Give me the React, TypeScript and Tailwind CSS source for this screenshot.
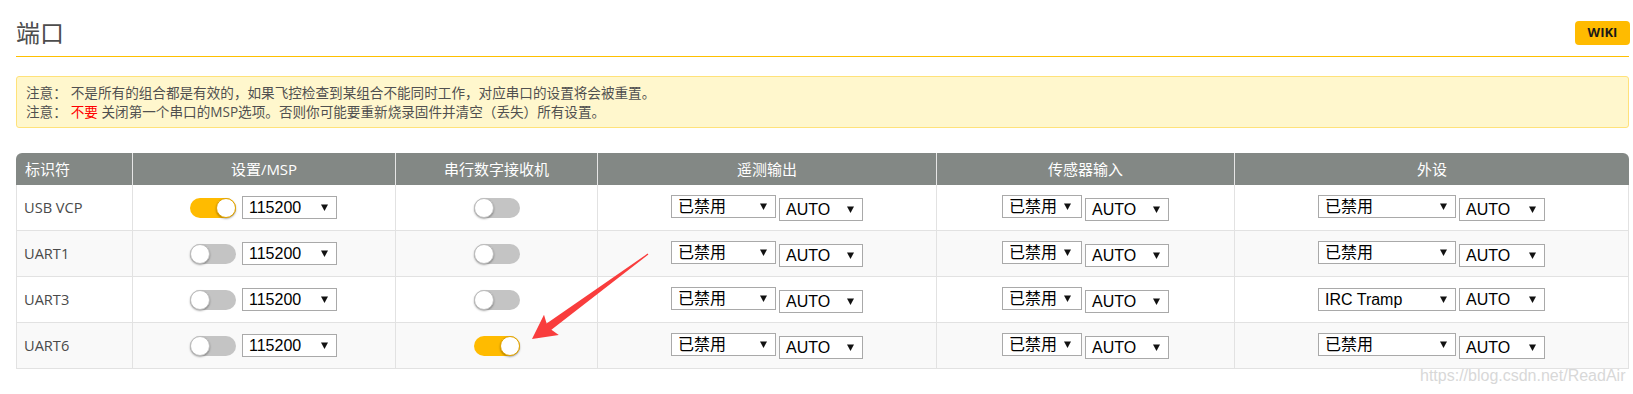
import { ReactNode } from "react";

type TPort = {
  id: string;
  msp: boolean;
  rx: boolean;
  peripheral: string;
};

const ports: TPort[] = [
  { id: "USB VCP", msp: true, rx: false, peripheral: "已禁用" },
  { id: "UART1", msp: false, rx: false, peripheral: "已禁用" },
  { id: "UART3", msp: false, rx: false, peripheral: "IRC Tramp" },
  { id: "UART6", msp: false, rx: true, peripheral: "已禁用" },
];

const uiFont = "font-['Open_Sans','Noto_Sans_CJK_SC',sans-serif]";

const Toggle = ({ on }: { on: boolean }) => (
  <div
    className={`flex items-center w-[46px] h-[20px] rounded-full ${
      on ? "justify-end bg-[#ffbb00]" : "justify-start bg-[#c4c4c4]"
    }`}
  >
    <div
      className={`w-[20px] h-[20px] rounded-full bg-white shadow-[0_1px_2px_rgba(0,0,0,0.35)] border ${
        on ? "border-[#e3a400]" : "border-[#bdbdbd]"
      }`}
    />
  </div>
);

const Select = ({
  value,
  width,
  className = "",
}: {
  value: string;
  width: string;
  className?: string;
}) => (
  <div
    className={`flex items-center justify-between h-[23px] border border-[#a9a9a9] bg-white pl-[6px] pr-[8px] text-[16px] leading-none text-black font-['Liberation_Sans','Noto_Sans_CJK_SC',sans-serif] ${width} ${className}`}
  >
    <span>{value}</span>
    <svg width="7" height="7" viewBox="0 0 7 7" className="shrink-0">
      <polygon points="0,0.5 7,0.5 3.5,7" fill="#111" />
    </svg>
  </div>
);

const Cell = ({
  children,
  className = "",
}: {
  children?: ReactNode;
  className?: string;
}) => (
  <div
    className={`flex items-center h-[46px] border-r border-b border-[#e2e2e2] ${className}`}
  >
    {children}
  </div>
);

const isCjk = (s: string) => /[\u4e00-\u9fff]/.test(s);

const App = () => {
  return (
    <div
      className={`relative w-[1633px] h-[394px] overflow-hidden bg-white pl-[16px] pr-[4px] ${uiFont}`}
    >
      {/* title bar */}
      <div className="flex items-center justify-between pt-[19px] pb-[9px] border-b border-[#ffc000]">
        <h1 className="text-[24px] leading-[28px] text-[#4d4d4d] font-normal">
          端口
        </h1>
        <button className="w-[55px] h-[24px] mr-[-1px] rounded-[4px] bg-[#ffbb00] text-[13px] font-bold text-[#1a1a1a]">
          WIKI
        </button>
      </div>

      {/* notes */}
      <div className="mt-[19px] border border-[#ffe27a] bg-[#fff7cd] rounded-[3px] pl-[9px] py-[6px] text-[13.6px] leading-[19px] text-[#505050]">
        <p>
          <span className="mr-[4px]">注意：</span>
          不是所有的组合都是有效的，如果飞控检查到某组合不能同时工作，对应串口的设置将会被重置。
        </p>
        <p>
          <span className="mr-[4px]">注意：</span>
          <span className="text-[#ff0000]">不要</span>{" "}
          关闭第一个串口的MSP选项。否则你可能要重新烧录固件并清空（丢失）所有设置。
        </p>
      </div>

      {/* ports table */}
      <div className="mt-[25px]">
        <div className="grid grid-cols-[117px_263px_202px_339px_298px_394px] h-[32px] bg-[#838885] rounded-t-[6px] text-[15px] text-white">
          <div className="flex items-center pl-[9px] border-r border-[#e6e6e6]">
            标识符
          </div>
          <div className="flex items-center justify-center border-r border-[#e6e6e6]">
            设置/MSP
          </div>
          <div className="flex items-center justify-center border-r border-[#e6e6e6]">
            串行数字接收机
          </div>
          <div className="flex items-center justify-center border-r border-[#e6e6e6]">
            遥测输出
          </div>
          <div className="flex items-center justify-center border-r border-[#e6e6e6]">
            传感器输入
          </div>
          <div className="flex items-center justify-center">外设</div>
        </div>

        {ports.map((p, i) => (
          <div
            key={p.id}
            className={`grid grid-cols-[117px_263px_202px_339px_298px_394px] ${
              i % 2 === 1 ? "bg-[#f9f9f9]" : "bg-white"
            }`}
          >
            <Cell className="border-l pl-[7px] text-[14.6px] text-[#4a4a4a]">
              {p.id}
            </Cell>
            <Cell className="justify-center gap-[6px] pr-[1px]">
              <Toggle on={p.msp} />
              <Select value="115200" width="w-[95px]" />
            </Cell>
            <Cell className="justify-center">
              <Toggle on={p.rx} />
            </Cell>
            <Cell className="justify-center gap-[3px]">
              <Select value="已禁用" width="w-[105px]" className="mb-[2px]" />
              <Select value="AUTO" width="w-[84px]" className="mt-[4px]" />
            </Cell>
            <Cell className="justify-center gap-[3px]">
              <Select value="已禁用" width="w-[80px]" className="mb-[2px] pr-[10px]" />
              <Select value="AUTO" width="w-[84px]" className="mt-[4px]" />
            </Cell>
            <Cell className="justify-center gap-[3px]">
              <Select
                value={p.peripheral}
                width="w-[138px]"
                className={isCjk(p.peripheral) ? "mb-[2px]" : ""}
              />
              <Select
                value="AUTO"
                width="w-[86px]"
                className={isCjk(p.peripheral) ? "mt-[4px]" : ""}
              />
            </Cell>
          </div>
        ))}
      </div>

      {/* annotation arrow */}
      <svg
        className="absolute left-0 top-0 pointer-events-none"
        width="1633"
        height="394"
        viewBox="0 0 1633 394"
      >
        <polygon
          points="647.6,253.6 546.6,323.4 544,314.7 532,339 558.8,334.9 551.4,329.8 648.4,254.4"
          fill="#f93d3d"
        />
      </svg>

      {/* watermark */}
      <span className="absolute left-[1420px] top-[367px] text-[16px] leading-[18px] text-[#d8d8d8] font-['Liberation_Sans',sans-serif]">
        https://blog.csdn.net/ReadAir
      </span>
    </div>
  );
};

export default App;
